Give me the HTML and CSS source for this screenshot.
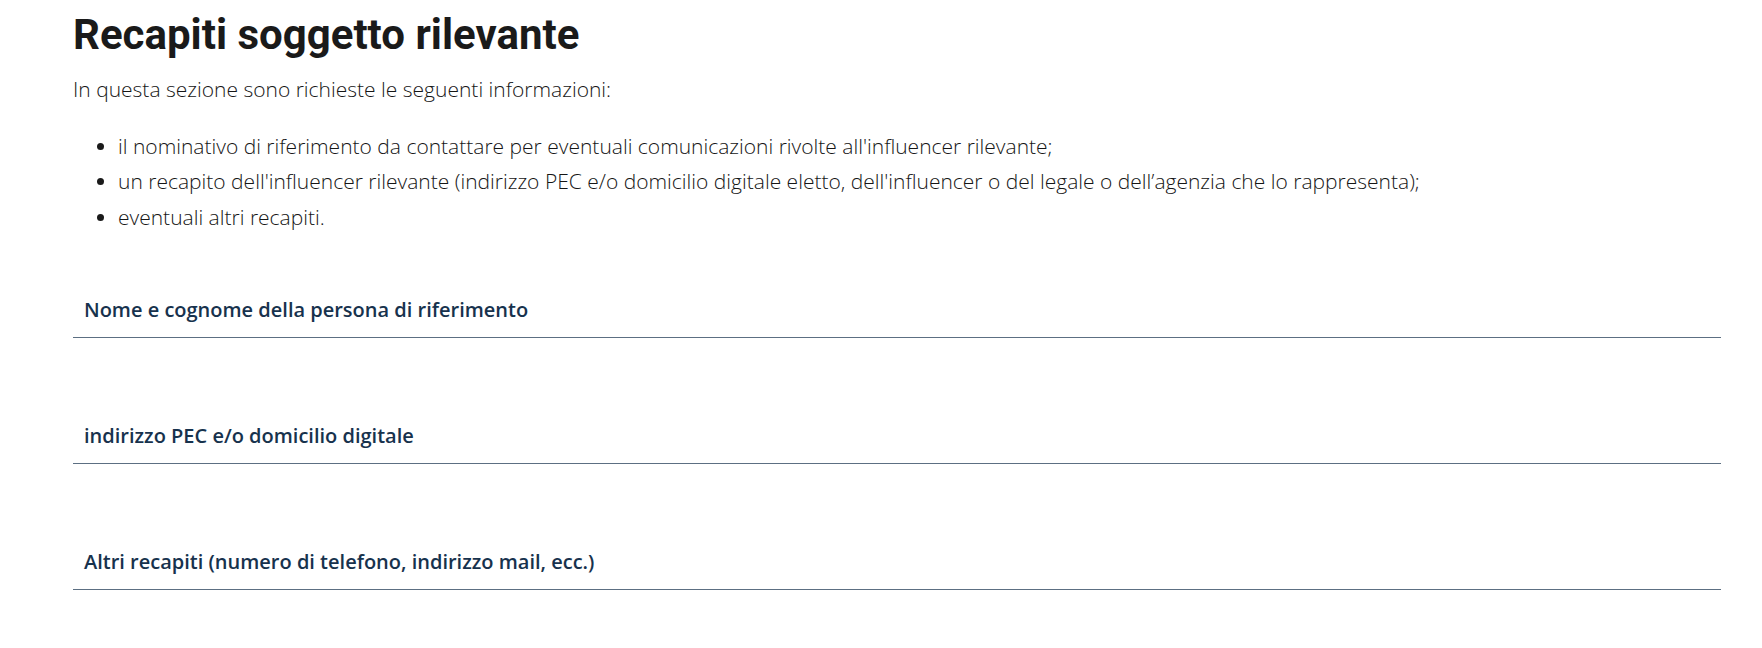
FILE: index.html
```html
<!DOCTYPE html>
<html lang="it">
<head>
<meta charset="utf-8">
<title>Recapiti soggetto rilevante</title>
<link rel="stylesheet" href="styles.css">
</head>
<body>
<main class="page">
  <h2 class="title">Recapiti soggetto rilevante</h2>
  <p class="intro">In questa sezione sono richieste le seguenti informazioni:</p>
  <ul class="info-list">
    <li>il nominativo di riferimento da contattare per eventuali comunicazioni rivolte all'influencer rilevante;</li>
    <li>un recapito dell'influencer rilevante (indirizzo PEC e/o domicilio digitale eletto, dell'influencer o del legale o dell’agenzia che lo rappresenta);</li>
    <li>eventuali altri recapiti.</li>
  </ul>
  <form class="form">
    <div class="field"><label class="field-label">Nome e cognome della persona di riferimento</label></div>
    <div class="field"><label class="field-label">indirizzo PEC e/o domicilio digitale</label></div>
    <div class="field"><label class="field-label">Altri recapiti (numero di telefono, indirizzo mail, ecc.)</label></div>
  </form>
</main>
</body>
</html>
```
FILE: styles.css
```css
html, body {
  margin: 0;
  padding: 0;
  background: #ffffff;
}
body {
  font-family: "Open Sans", "Noto Sans", sans-serif;
  color: #161616;
}
.page {
  padding: 11px 41px 0 73px;
}
.title {
  margin: 0;
  font-family: Roboto, "Liberation Sans", sans-serif;
  font-size: 42px;
  line-height: 48px;
  font-weight: 700;
  color: #1a1a1a;
}
.intro {
  margin: 16px 0 0 0;
  font-size: 21px;
  line-height: 28px;
  font-weight: 300;
}
.info-list {
  margin: 25.5px 0 0 0;
  padding: 0 0 0 24px;
  list-style: none;
  font-size: 21px;
  line-height: 35.5px;
  font-weight: 300;
}
.info-list li {
  display: flex;
  align-items: center;
}
.info-list li::before {
  content: "";
  flex: none;
  width: 7px;
  height: 7px;
  border-radius: 50%;
  background: #1a1a1a;
  margin-right: 14px;
}
.form {
  display: flex;
  flex-direction: column;
  gap: 88px;
  margin-top: 65px;
}
.field {
  border-bottom: 1px solid #5c6f82;
  padding: 0 0 17px 11px;
}
.field-label {
  display: block;
  font-size: 20px;
  line-height: 20px;
  font-weight: 600;
  color: #17324d;
}
```
